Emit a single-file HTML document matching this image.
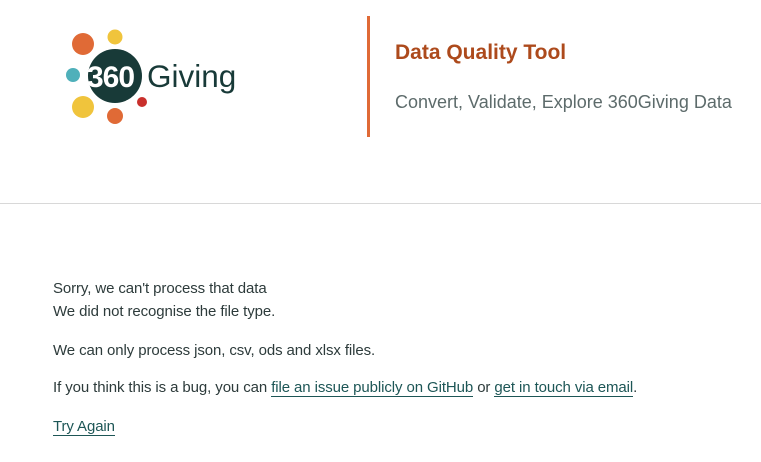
<!DOCTYPE html>
<html><head><style>
body{margin:0;width:761px;height:462px;background:#fff;font-family:"Liberation Sans",sans-serif;position:relative;overflow:hidden}
.t{position:absolute;left:53px;font-size:15px;color:#2d3b3b;white-space:nowrap;letter-spacing:-0.1px}
a{color:#1d5656;text-decoration:none;border-bottom:1.5px solid #1d5656}
</style></head><body>
<svg width="250" height="140" style="position:absolute;left:0;top:0">
<circle cx="83" cy="44" r="11" fill="#e06a36"/>
<circle cx="115" cy="37" r="7.5" fill="#f0c43c"/>
<circle cx="73" cy="75" r="7" fill="#4fb0ba"/>
<circle cx="83" cy="107" r="11" fill="#f0c43c"/>
<circle cx="115" cy="116" r="8" fill="#e06a36"/>
<circle cx="142" cy="102" r="5" fill="#c9302c"/>
<circle cx="115" cy="76" r="27" fill="#183a38"/>
<text x="87" y="87" font-family="Liberation Sans" font-weight="bold" font-size="30" fill="#fff" letter-spacing="-1">360</text>
<text x="147" y="87" font-family="Liberation Sans" font-size="31.5" fill="#183a38">Giving</text>
</svg>
<div style="position:absolute;left:367px;top:16px;width:3px;height:121px;background:#e06a36"></div>
<div style="position:absolute;left:395px;top:41px;font-size:21px;font-weight:bold;color:#ad4a1c">Data Quality Tool</div>
<div style="position:absolute;left:395px;top:92px;font-size:18px;color:#5d6b6b">Convert, Validate, Explore 360Giving Data</div>
<div style="position:absolute;left:0;top:203px;width:761px;height:1px;background:#d8d8d8"></div>
<div class="t" style="top:280px">Sorry, we can't process that data</div>
<div class="t" style="top:303px">We did not recognise the file type.</div>
<div class="t" style="top:342px">We can only process json, csv, ods and xlsx files.</div>
<div class="t" style="top:379px">If you think this is a bug, you can <a>file an issue publicly on GitHub</a> or <a>get in touch via email</a>.</div>
<div class="t" style="top:418px"><a>Try Again</a></div>
</body></html>
